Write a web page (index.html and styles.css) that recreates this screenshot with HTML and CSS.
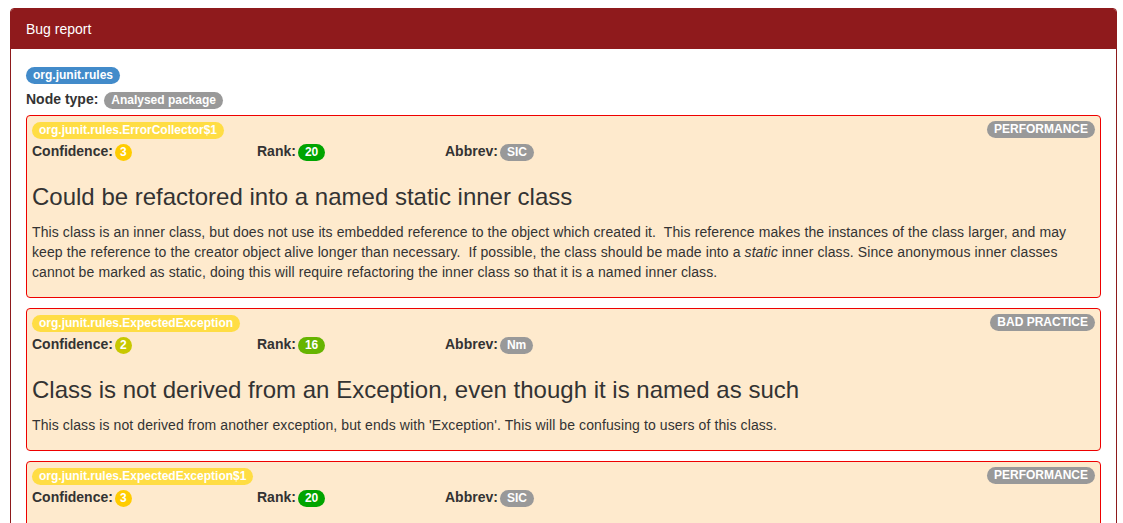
FILE: index.html
```html
<!DOCTYPE html>
<html>
<head>
<meta charset="utf-8">
<link rel="stylesheet" href="styles.css">
</head>
<body>
<div class="panel">
  <div class="panel-heading">Bug report</div>
  <div class="panel-body">
    <div class="line"><span class="tag tag-blue">org.junit.rules</span></div>
    <div class="line node-type"><b>Node type:</b> <span class="tag tag-gray">Analysed package</span></div>

    <div class="bug">
      <span class="tag tag-gray category">PERFORMANCE</span>
      <div class="line"><span class="tag tag-yellow">org.junit.rules.ErrorCollector$1</span></div>
      <div class="meta">
        <div class="meta-item"><b>Confidence:</b><span class="tag num conf-3">3</span></div>
        <div class="meta-item"><b>Rank:</b><span class="tag num rank-20">20</span></div>
        <div class="meta-item"><b>Abbrev:</b><span class="tag tag-gray">SIC</span></div>
      </div>
      <h3 class="bug-title">Could be refactored into a named static inner class</h3>
      <p class="bug-desc">This class is an inner class, but does not use its embedded reference to the object which created it.&nbsp; This reference makes the instances of the class larger, and may keep the reference to the creator object alive longer than necessary.&nbsp; If possible, the class should be made into a <em>static</em> inner class. Since anonymous inner classes cannot be marked as static, doing this will require refactoring the inner class so that it is a named inner class.</p>
    </div>

    <div class="bug">
      <span class="tag tag-gray category">BAD PRACTICE</span>
      <div class="line"><span class="tag tag-yellow">org.junit.rules.ExpectedException</span></div>
      <div class="meta">
        <div class="meta-item"><b>Confidence:</b><span class="tag num conf-2">2</span></div>
        <div class="meta-item"><b>Rank:</b><span class="tag num rank-16">16</span></div>
        <div class="meta-item"><b>Abbrev:</b><span class="tag tag-gray">Nm</span></div>
      </div>
      <h3 class="bug-title">Class is not derived from an Exception, even though it is named as such</h3>
      <p class="bug-desc">This class is not derived from another exception, but ends with 'Exception'. This will be confusing to users of this class.</p>
    </div>

    <div class="bug">
      <span class="tag tag-gray category">PERFORMANCE</span>
      <div class="line"><span class="tag tag-yellow">org.junit.rules.ExpectedException$1</span></div>
      <div class="meta">
        <div class="meta-item"><b>Confidence:</b><span class="tag num conf-3">3</span></div>
        <div class="meta-item"><b>Rank:</b><span class="tag num rank-20">20</span></div>
        <div class="meta-item"><b>Abbrev:</b><span class="tag tag-gray">SIC</span></div>
      </div>
      <h3 class="bug-title">Could be refactored into a named static inner class</h3>
      <p class="bug-desc">This class is an inner class, but does not use its embedded reference to the object which created it.</p>
    </div>
  </div>
</div>
</body>
</html>
```

FILE: styles.css
```css
html, body {
  margin: 0;
  padding: 0;
  background: #fff;
}
body {
  font-family: "Liberation Sans", Arial, sans-serif;
  font-size: 14px;
  line-height: 20px;
  color: #333;
  padding: 8px 6px 0 10px;
  overflow: hidden;
  height: 515px;
}
.panel {
  border: 1px solid #8e1a1c;
  border-radius: 4px;
  background: #fff;
}
.panel-heading {
  background: #8f1a1c;
  color: #fff;
  padding: 10px 15px;
  border-radius: 3px 3px 0 0;
}
.panel-body {
  padding: 15px;
}
.line {
  height: 20px;
  line-height: 20px;
}
.node-type {
  margin-top: 5px;
}
.node-type .tag {
  margin-left: 2px;
}
.tag {
  display: inline-block;
  font-size: 12px;
  font-weight: bold;
  line-height: 13px;
  padding: 2px 7px 2px;
  border-radius: 9px;
  color: #fff;
  vertical-align: middle;
  white-space: nowrap;
}
.tag-blue { background: #428bca; }
.tag-gray { background: #999; }
.tag-yellow { background: #ffdd44; }
.conf-3 { background: #ffcc00; }
.conf-2 { background: #c8c800; }
.rank-20 { background: #00a400; }
.rank-16 { background: #66b400; }
.bug {
  position: relative;
  border: 1px solid #ee0000;
  border-radius: 4px;
  background: #feeacd;
  padding: 3px 5px 5px 5px;
  margin-top: 6px;
}
.bug + .bug {
  margin-top: 10px;
}
.category {
  position: absolute;
  top: 5px;
  right: 5px;
}
.meta {
  display: flex;
  height: 20px;
  line-height: 20px;
  margin-top: 2px;
}
.meta-item {
  font-size: 14px;
}
.meta-item:nth-child(1) { width: 225px; }
.meta-item:nth-child(2) { width: 188px; }
.meta-item .tag {
  margin-left: 2px;
}
.conf-3, .conf-2 {
  padding-left: 5px;
  padding-right: 5px;
}
.bug-title {
  font-size: 24px;
  font-weight: normal;
  line-height: 26px;
  margin: 23px 0 12px;
}
.bug-desc {
  margin: 0 0 10px;
  letter-spacing: 0.1px;
}
```
